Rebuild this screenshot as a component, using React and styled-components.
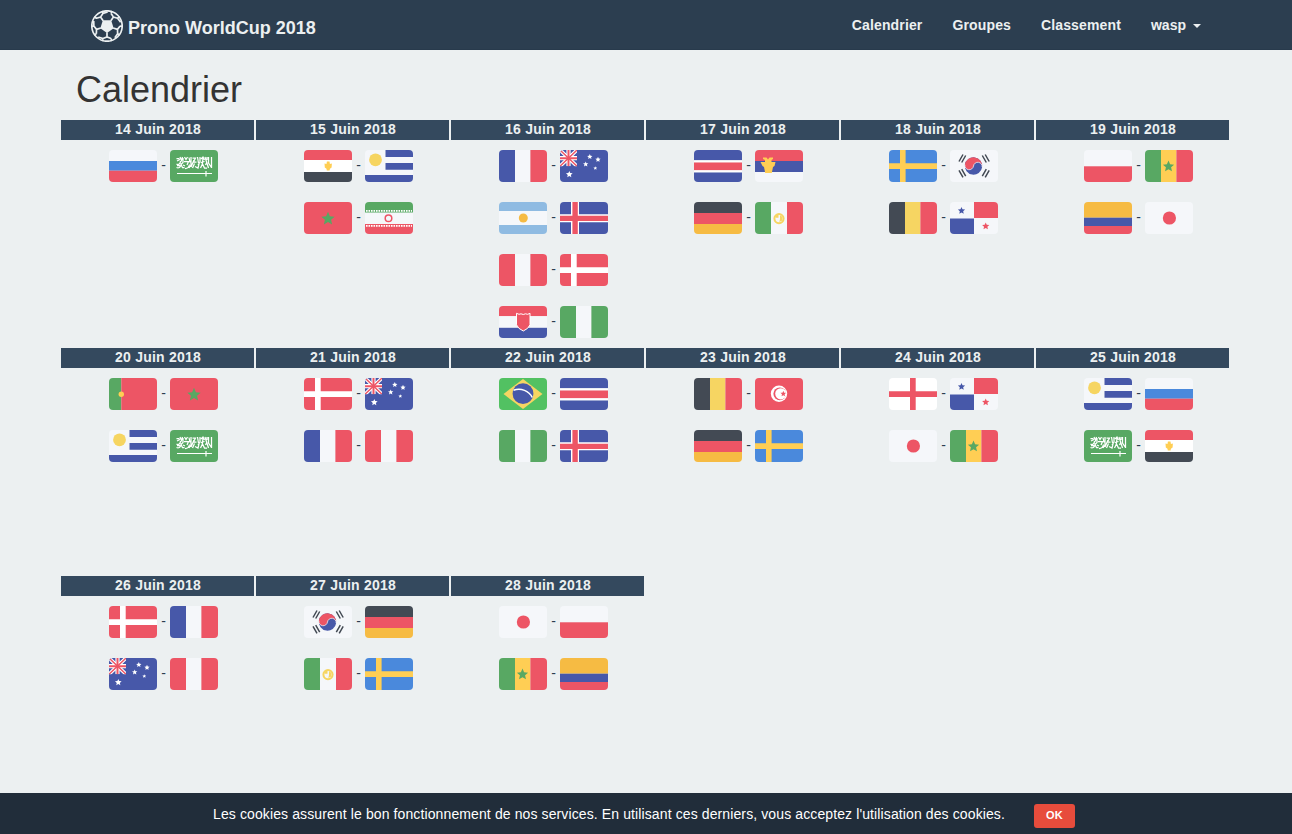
import React from 'react';
import styled, { createGlobalStyle } from 'styled-components';

const C = {
  red: '#ed5565', blue: '#4758a9', white: '#f5f7fa', green: '#58a863', dark: '#434a54',
  yellow: '#f6d562', gold: '#ffce54', amber: '#f6bb43', azure: '#4a89dc', sky: '#8fbbe2',
};

const GlobalStyle = createGlobalStyle`
  * { box-sizing: border-box; }
  body {
    margin: 0;
    background: #ecf0f1;
    color: #2c3e50;
    font: 14px/20px "Liberation Sans", Arial, sans-serif;
  }
`;

const Page = styled.div`
  height: 834px;
  overflow: hidden;
  display: flex;
  flex-direction: column;
`;

const Navbar = styled.header`
  height: 50px;
  background: #2c3e50;
  border-bottom: 1px solid #283a4c;
`;

const NavInner = styled.div`
  width: 1170px;
  height: 50px;
  margin-left: 61px;
  padding: 0 30px;
  display: flex;
  justify-content: space-between;
`;

const Brand = styled.a`
  display: flex;
  align-items: center;
  gap: 5px;
  height: 52px;
  color: #ecf0f1;
  font-size: 18px;
  font-weight: bold;
  span { padding-top: 3px; }
`;

const Menu = styled.nav`
  display: flex;
  gap: 30px;
`;

const MenuLink = styled.a`
  display: flex;
  align-items: center;
  gap: 7px;
  color: #ecf0f1;
  font-weight: bold;
  letter-spacing: ${p => p.$spacing ?? 0.14}px;
`;

const Caret = styled.i`
  border: 4px solid transparent;
  border-top-color: #ecf0f1;
  border-bottom: 0;
  margin-top: 2px;
`;

const Main = styled.main`
  width: 1170px;
  margin-left: 61px;
  flex: 1;
`;

const Title = styled.h1`
  margin: 20px 0 10px;
  padding-left: 15px;
  font-size: 36px;
  line-height: 40px;
  font-weight: normal;
  color: #333;
`;

const Calendar = styled.div`
  display: grid;
  grid-template-columns: repeat(6, 195px);
  grid-template-rows: 228px 228px auto;
`;

const Day = styled.section`
  padding-right: 2px;
`;

const DayTitle = styled.h2`
  margin: 0;
  padding-left: 1px;
  height: 20px;
  background: #34495e;
  color: #ecf0f1;
  font-size: 14px;
  line-height: 19px;
  text-align: center;
  letter-spacing: 0.22px;
`;

const Match = styled.div`
  height: 52px;
  padding-left: 48px;
  display: flex;
  align-items: center;
`;

const Dash = styled.span`
  width: 13px;
  text-align: center;
  padding-bottom: 2px;
`;

const FlagSvg = styled.svg`
  width: 48px;
  height: 32px;
  border-radius: 4px;
  display: block;
`;

const CookieBar = styled.footer`
  height: 41px;
  flex: none;
  background: #212d3a;
  color: #fff;
  display: flex;
  align-items: center;
  padding-left: 213px;
  padding-top: 3px;
`;

const CookieText = styled.span`
  width: 821px;
  white-space: nowrap;
  letter-spacing: 0.112px;
  padding-bottom: 2px;
`;

const OkButton = styled.button`
  width: 41px;
  height: 24px;
  padding: 0 0 2px;
  border: 0;
  border-radius: 3px;
  background: #e74c3c;
  color: #fff;
  font: bold 11px "Liberation Sans", Arial, sans-serif;
  letter-spacing: 0.3px;
  margin-top: 2px;
`;

const starPoints = (x, y, r) => Array.from({ length: 10 }, (_, i) => {
  const a = (i * 36 - 90) * Math.PI / 180;
  const q = i % 2 ? r * 0.46 : r;
  return `${(x + q * Math.cos(a)).toFixed(2)},${(y + q * Math.sin(a)).toFixed(2)}`;
}).join(' ');

const Star = ({ x, y, r, fill }) => <polygon points={starPoints(x, y, r)} fill={fill} />;

const Rows = ({ colors, at }) => colors.map((c, i) => (
  <rect key={i} width="48" y={at[i]} height={(at[i + 1] ?? 32) - at[i]} fill={c} />
));

const Cols = ({ colors, at = [0, 16, 31.4] }) => colors.map((c, i) => (
  <rect key={i} height="32" x={at[i]} width={(at[i + 1] ?? 48) - at[i]} fill={c} />
));

const Cross = ({ x, y, w, h = w, fill }) => (
  <path d={`M${x} 0h${w}v32h${-w}zM0 ${y}h48v${h}H0z`} fill={fill} />
);

const flags = {
  ru: <Rows colors={[C.white, C.azure, C.red]} at={[0, 11, 20.7]} />,
  sa: <>
    <rect width="48" height="32" fill={C.green} />
    <g fill="none" stroke="#fff" strokeWidth="1.250">
      <path d="M6.500 8.500h3M7 11l3-1.500M6.500 14c2 1.500 4-.5 4-3M6.500 17.500c2 .8 4 0 4.500-3l1.500 3h2M10 7l1.500 3.500 1-3.500M13 8v4.500l-2 2M14.500 7l1.500 2.500L17.500 7M14 11.500h4.500L17 15M15 18.500c2.500 0 4-1.500 4.500-4M19 7.500l1 5M21 7v8l-2 3M22.500 18l2-4.500M22.500 8h3l-2 4h3M25 16.500l3 1.500 1-4M27.500 7l1 6M30 7v5l-2 3M31 9l2-2 1.500 3M31 12.500l3.500-1M30.500 18l2-4 2 4h2.500M35 7l3.500 11M37 12l-1.500 3M38.500 7v6l3 4.500M41.500 7v11M37 7v3M24 10l-3 7M7 15.500h3M13 15l2 1M33 8l-1 8" />
      <path d="M7 23.500h35M36 21v5.500" strokeWidth="1.2" />
    </g>
  </>,
  eg: <>
    <Rows colors={[C.red, '#fff', C.dark]} at={[0, 10, 22]} />
    <path d="M20.500 13.500l2 .5.4-2.500h2.600l.4 2.500 2-.5-.3 4-1.700 1.200-.3 1.800h-2.800l-.3-1.800-1.700-1.200z" fill={C.gold} />
  </>,
  uy: <>
    <rect width="48" height="32" fill={C.white} />
    <path d="M20.500 0H48v7H20.500zM20.500 13H48v6.700H20.500zM0 25h48v7H0z" fill={C.blue} />
    <circle cx="10.500" cy="9.800" r="6.400" fill={C.yellow} />
  </>,
  ma: <><rect width="48" height="32" fill={C.red} /><Star x={24} y={16.800} r={7} fill={C.green} /></>,
  ir: <>
    <Rows colors={[C.green, C.white, C.red]} at={[0, 10.700, 22]} />
    <path d="M1 8.900h46M1 23.800h46" stroke="#fff" strokeWidth="1.700" strokeDasharray="1.600 0.900" />
    <circle cx="23.500" cy="16.200" r="3.300" fill="none" stroke={C.red} strokeWidth="1.500" />
  </>,
  fr: <Cols colors={[C.blue, C.white, C.red]} />,
  au: <>
    <rect width="48" height="32" fill={C.blue} />
    <svg width="17" height="16.300" viewBox="0 0 17 16.300">
      <path d="M0 0l17 16.300M17 0L0 16.300" stroke="#fff" strokeWidth="3.600" />
      <path d="M8.500 0v16.300M0 8.200h17" stroke="#fff" strokeWidth="4.200" />
      <path d="M0 0l17 16.300M17 0L0 16.300" stroke={C.red} strokeWidth="1.400" />
      <path d="M8.500 0v16.300M0 8.200h17" stroke={C.red} strokeWidth="2" />
    </svg>
    <Star x={9.300} y={24.400} r={3.500} fill="#fff" />
    <Star x={29.800} y={6.800} r={2.800} fill="#fff" />
    <Star x={38} y={9.600} r={2.800} fill="#fff" />
    <Star x={25.700} y={14.200} r={2.800} fill="#fff" />
    <Star x={35.300} y={18.200} r={2} fill="#fff" />
  </>,
  ar: <><Rows colors={[C.sky, C.white, C.sky]} at={[0, 9, 23]} /><circle cx="24.300" cy="16" r="4.500" fill={C.amber} /></>,
  is: <><rect width="48" height="32" fill={C.blue} /><Cross x={11} y={12.300} w={8} h={7.900} fill="#fff" /><Cross x={12.400} y={13.700} w={5.400} h={5.300} fill={C.red} /></>,
  pe: <Cols colors={[C.red, C.white, C.red]} />,
  dk: <><rect width="48" height="32" fill={C.red} /><Cross x={11} y={13.200} w={5.700} fill="#fff" /></>,
  hr: <>
    <Rows colors={[C.red, C.white, C.blue]} at={[0, 10.200, 21.800]} />
    <path d="M17.500 7.300l2.500 1 2-.5 2.300.7 2.200-.7 2.200.5 2.300-1v11.500q-1.500 4-6.700 6.200-5.300-2.200-6.800-6.200z" fill={C.red} stroke="#fff" strokeWidth="1" />
  </>,
  ng: <Cols colors={[C.green, C.white, C.green]} />,
  cr: <Rows colors={[C.blue, '#fff', C.red, '#fff', C.blue]} at={[0, 10.300, 12.500, 20.300, 22.500]} />,
  rs: <>
    <Rows colors={[C.red, C.blue, C.white]} at={[0, 11, 22]} />
    <path d="M8 7.500h3.500l1.500 2 1.500-2H18V9l-1.500 1v2h4l-1 4-1.500 1-1.200 6h-6.600L9 17l-1.500-1-2-4h4.500v-2L8 9z" fill={C.gold} />
  </>,
  de: <Rows colors={[C.dark, C.red, C.amber]} at={[0, 11, 22]} />,
  mx: <>
    <Cols colors={[C.green, C.white, C.red]} at={[0, 16, 32]} />
    <circle cx="24" cy="16.600" r="4.600" fill="none" stroke={C.yellow} strokeWidth="2" />
    <path d="M20.500 13.500l3-.7v3h-3zM25 13l2.500 2-.2 3.500-3 1.500.7-3z" fill={C.yellow} />
  </>,
  se: <><rect width="48" height="32" fill={C.azure} /><Cross x={11} y={13.300} w={5.600} fill={C.gold} /></>,
  kr: <>
    <rect width="48" height="32" fill={C.white} />
    <g transform="rotate(8 23.500 16)">
      <circle cx="23.500" cy="16" r="8.700" fill={C.blue} />
      <path d="M14.800 16A8.700 8.700 0 0 1 32.200 16A4.350 4.350 0 0 0 23.500 16A4.350 4.350 0 0 1 14.800 16z" fill={C.red} />
      <path d="M32.200 16A4.350 4.350 0 0 0 23.500 16A4.350 4.350 0 0 1 14.800 16" fill="none" stroke={C.white} strokeWidth=".7" />
    </g>
    <path d="M9 11.500l4-7M11.700 12.500l4-7M32.300 5.500l4 7M35.200 4.500l4 7M9 20.300l4 7M11.700 19.200l4 7M32.300 26.200l4-7M35.200 27.300l4-7" stroke={C.dark} strokeWidth="1.500" />
  </>,
  be: <Cols colors={[C.dark, C.yellow, C.red]} />,
  pa: <>
    <rect width="48" height="32" fill={C.white} />
    <path d="M24 0h24v16H24z" fill={C.red} /><path d="M0 16.500h24V32H0z" fill={C.blue} />
    <Star x={11.500} y={8.700} r={3.800} fill={C.blue} /><Star x={35.700} y={24.200} r={3.800} fill={C.red} />
  </>,
  pl: <Rows colors={[C.white, C.red]} at={[0, 16.300]} />,
  sn: <><Cols colors={[C.green, C.gold, C.red]} /><Star x={23.500} y={16.500} r={5.900} fill={C.green} /></>,
  co: <Rows colors={[C.amber, C.blue, C.red]} at={[0, 15.700, 24]} />,
  jp: <><rect width="48" height="32" fill={C.white} /><circle cx="24.400" cy="16" r="6.600" fill={C.red} /></>,
  pt: <><Cols colors={[C.green, C.red]} at={[0, 12.300]} /><circle cx="12.300" cy="16.300" r="2.700" fill={C.gold} /></>,
  br: <>
    <rect width="48" height="32" fill="#52c162" />
    <path d="M4.500 16L24 1l19.500 15L24 31z" fill={C.yellow} />
    <circle cx="24" cy="15.700" r="10.400" fill={C.blue} />
    <path d="M14.500 12.300C22 9.500 30 13 33.300 19.500" fill="none" stroke="#fff" strokeWidth="1.500" />
  </>,
  tn: <>
    <rect width="48" height="32" fill={C.red} />
    <circle cx="24" cy="15.800" r="8.200" fill="#fff" />
    <circle cx="24.800" cy="15.800" r="6.400" fill={C.red} />
    <circle cx="25.800" cy="15.800" r="5.600" fill="#fff" />
    <Star x={28.300} y={15.800} r={3} fill={C.red} />
  </>,
  en: <><rect width="48" height="32" fill="#fff" /><Cross x={21} y={13.300} w={5.700} fill={C.red} /></>,
};

const Flag = ({ code }) => <FlagSvg viewBox="0 0 48 32">{flags[code]}</FlagSvg>;

const spokes = [0, 72, 144, 216, 288];
const Ball = () => (
  <svg width="32" height="32" viewBox="-16 -16 32 32">
    <circle r="15.200" fill="none" stroke="#ecf0f1" strokeWidth="1.700" />
    <g transform="rotate(180)">
      <polygon points="0,-7 6.660,-2.160 4.110,5.660 -4.110,5.660 -6.660,-2.160" fill="#ecf0f1" />
      {spokes.map(a => (
        <path
          key={a}
          transform={`rotate(${a})`}
          d="M0-6.500v-4.500M-4-12.500l4 1.500 4-1.500M4-12.500l.8-2.500M-4-12.500l-.8-2.500M4-12.500l4.800 1.400"
          stroke="#ecf0f1"
          strokeWidth="1.700"
          fill="none"
        />
      ))}
    </g>
  </svg>
);

const days = [
  [14, 'ru-sa'],
  [15, 'eg-uy', 'ma-ir'],
  [16, 'fr-au', 'ar-is', 'pe-dk', 'hr-ng'],
  [17, 'cr-rs', 'de-mx'],
  [18, 'se-kr', 'be-pa'],
  [19, 'pl-sn', 'co-jp'],
  [20, 'pt-ma', 'uy-sa'],
  [21, 'dk-au', 'fr-pe'],
  [22, 'br-cr', 'ng-is'],
  [23, 'be-tn', 'de-se'],
  [24, 'en-pa', 'jp-sn'],
  [25, 'uy-ru', 'sa-eg'],
  [26, 'dk-fr', 'au-pe'],
  [27, 'kr-de', 'mx-se'],
  [28, 'jp-pl', 'sn-co'],
];

export default function App() {
  return (
    <Page>
      <GlobalStyle />
      <Navbar>
        <NavInner>
          <Brand><Ball /><span>Prono WorldCup 2018</span></Brand>
          <Menu>
            <MenuLink>Calendrier</MenuLink>
            <MenuLink>Groupes</MenuLink>
            <MenuLink>Classement</MenuLink>
            <MenuLink $spacing={0}>wasp<Caret /></MenuLink>
          </Menu>
        </NavInner>
      </Navbar>
      <Main>
        <Title>Calendrier</Title>
        <Calendar>
          {days.map(([day, ...matches]) => (
            <Day key={day}>
              <DayTitle>{day} Juin 2018</DayTitle>
              {matches.map(m => {
                const [home, away] = m.split('-');
                return <Match key={m}><Flag code={home} /><Dash>-</Dash><Flag code={away} /></Match>;
              })}
            </Day>
          ))}
        </Calendar>
      </Main>
      <CookieBar>
        <CookieText>Les cookies assurent le bon fonctionnement de nos services. En utilisant ces derniers, vous acceptez l'utilisation des cookies.</CookieText>
        <OkButton>OK</OkButton>
      </CookieBar>
    </Page>
  );
}
